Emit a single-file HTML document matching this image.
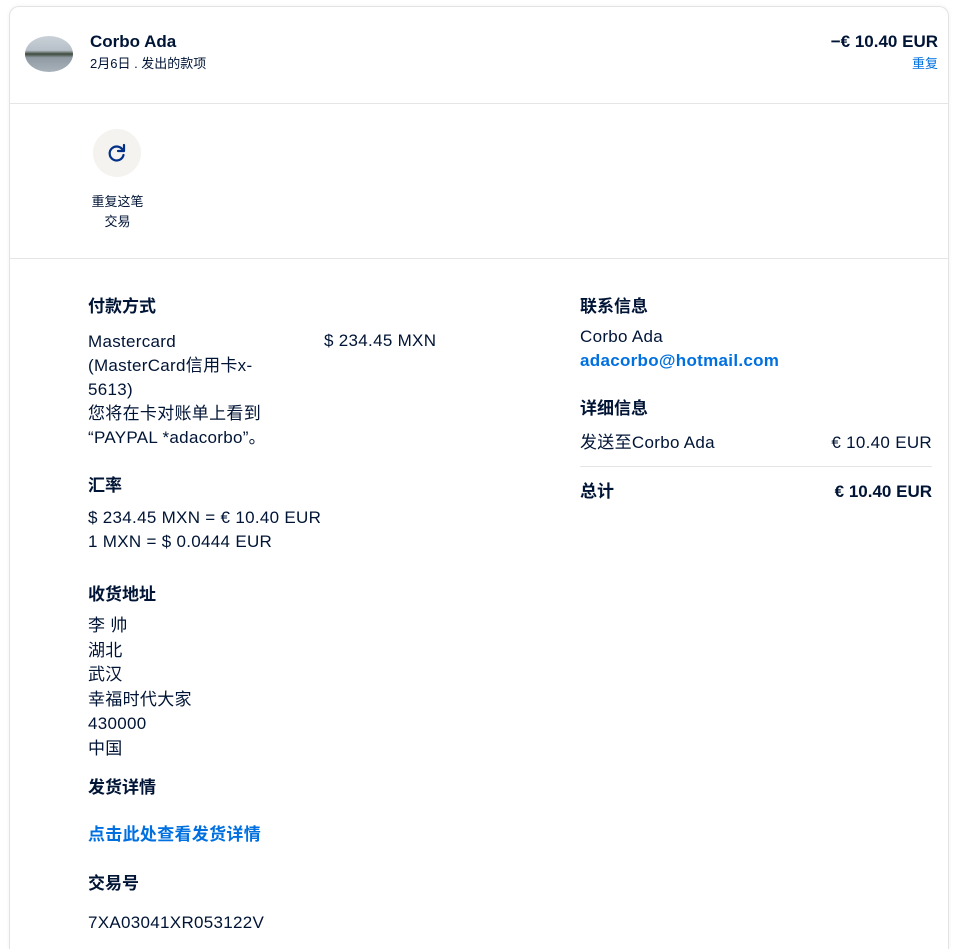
<!DOCTYPE html>
<html><head><meta charset="utf-8"><style>
html,body{margin:0;}
body{background:#fff;font-family:"Liberation Sans","Noto Sans CJK SC",sans-serif;color:#001435;}
.card{position:absolute;left:9px;top:6px;width:940px;height:943px;border:1px solid #e3e3e3;border-bottom:none;border-radius:10px 10px 0 0;box-shadow:0 0 4px rgba(0,0,0,.06);box-sizing:border-box;}
.a{position:absolute;white-space:nowrap;line-height:22px;}
.h{font-weight:bold;font-size:17px;}
.t{font-size:17px;letter-spacing:0.3px;}
.blue{color:#0070e0;font-weight:bold;}
.line{position:absolute;left:9px;width:940px;height:1px;background:#e5e5e5;}
</style></head><body>
<div class="card"></div>
<div class="a" style="left:25px;top:36px;width:48px;height:36px;border-radius:50%;overflow:hidden;background:linear-gradient(#c9d0d8 0%,#b7c0c9 40%,#3d4a3c 50%,#8f9aa3 60%,#a9b2ba 100%);"></div>
<div class="a h" style="left:90px;top:31px;">Corbo Ada</div>
<div class="a" style="left:90px;top:53px;font-size:13px;">2月6日 . 发出的款项</div>
<div class="a h" style="right:22px;top:31px;">−€ 10.40 EUR</div>
<div class="a" style="right:22px;top:53px;font-size:13px;color:#0070e0;">重复</div>
<div class="line" style="top:103px"></div>
<div class="a" style="left:93px;top:129px;width:48px;height:48px;border-radius:50%;background:#f5f3ef;">
<svg width="48" height="48" viewBox="0 0 48 48"><path d="M30 21.5A7 7 0 1 0 30.5 26" fill="none" stroke="#003087" stroke-width="2.2" stroke-linecap="round"/><path d="M31 16v6h-6" fill="none" stroke="#003087" stroke-width="2.2" stroke-linecap="round" stroke-linejoin="round"/></svg></div>
<div class="a" style="left:89px;top:192px;font-size:13px;text-align:center;width:57px;line-height:20px;">重复这笔<br>交易</div>
<div class="line" style="top:258px"></div>
<div class="a h" style="left:88px;top:296px;">付款方式</div>
<div class="a t" style="left:88px;top:330px;line-height:24px;">Mastercard<br>(MasterCard信用卡x-<br>5613)<br>您将在卡对账单上看到<br>“PAYPAL *adacorbo”。</div>
<div class="a t" style="left:324px;top:330px;">$ 234.45 MXN</div>
<div class="a h" style="left:88px;top:475px;">汇率</div>
<div class="a t" style="left:88px;top:506px;line-height:24px;">$ 234.45 MXN = € 10.40 EUR<br>1 MXN = $ 0.0444 EUR</div>
<div class="a h" style="left:88px;top:584px;">收货地址</div>
<div class="a t" style="left:88px;top:614px;line-height:24.5px;">李 帅<br>湖北<br>武汉<br>幸福时代大家<br>430000<br>中国</div>
<div class="a h" style="left:88px;top:777px;">发货详情</div>
<div class="a t blue" style="left:88px;top:824px;">点击此处查看发货详情</div>
<div class="a h" style="left:88px;top:873px;">交易号</div>
<div class="a t" style="left:88px;top:912px;">7XA03041XR053122V</div>
<div class="a h" style="left:580px;top:296px;">联系信息</div>
<div class="a t" style="left:580px;top:326px;">Corbo Ada</div>
<div class="a t blue" style="left:580px;top:350px;">adacorbo@hotmail.com</div>
<div class="a h" style="left:580px;top:398px;">详细信息</div>
<div class="a t" style="left:580px;top:432px;">发送至Corbo Ada</div>
<div class="a t" style="right:28px;top:432px;">€ 10.40 EUR</div>
<div class="a" style="left:580px;top:466px;width:352px;height:1px;background:#e5e5e5;"></div>
<div class="a h" style="left:580px;top:481px;">总计</div>
<div class="a h" style="right:28px;top:481px;">€ 10.40 EUR</div>
</body></html>
